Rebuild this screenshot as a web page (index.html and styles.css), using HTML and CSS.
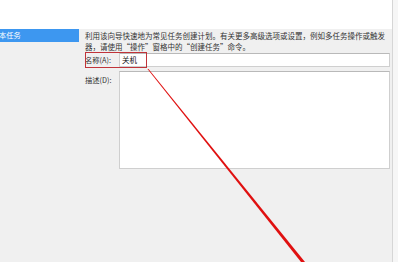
FILE: index.html
```html
<!DOCTYPE html>
<html>
  <head>
    <meta charset="UTF-8" />
    <meta name="viewport" content="width=device-width, initial-scale=1.0" />
    <title>创建基本任务向导</title>
    <link rel="stylesheet" href="styles.css">
  </head>
  <body>
    <div class="window">
      <div class="window__main">
        <div class="header"></div>
        <div class="body">
          <div class="steps">
            <div class="steps__item steps__item--active">本任务</div>
          </div>
          <div class="panel">
            <p class="panel__intro">
              利用该向导快速地为常见任务创建计划。有关更多高级选项或设置，例如多任务操作或触发器，请使用“操作”窗格中的“创建任务”命令。
            </p>
            <div class="field field--name">
              <label class="field__label">名称(A):</label>
              <div class="field__input">关机</div>
              <div class="mark"></div>
            </div>
            <div class="field field--desc">
              <label class="field__label">描述(D):</label>
              <div class="field__input field__input--area"></div>
            </div>
          </div>
        </div>
      </div>
      <div class="window__edge"></div>
    </div>

    <!-- hand-drawn arrow from the red box -->
    <svg class="arrow" width="398" height="262" viewBox="0 0 398 262">
      <polygon points="147.5,69 148.5,69 305,262 301,262" fill="#e01010" />
    </svg>
  </body>
</html>
```

FILE: styles.css
```css
body {
  margin: 0;
  padding: 0;
  background: #f0f0f0;
  font-family: "Noto Sans CJK SC", "Microsoft YaHei", sans-serif;
  color: #222;
  width: 398px;
  height: 262px;
  overflow: hidden;
}

.window {
  display: flex;
  height: 262px;
}

.window__main {
  flex: 1;
  display: flex;
  flex-direction: column;
}

.window__edge {
  width: 5px;
  border-left: 1px solid #d6d6d6;
  background: #f6f6f6;
}

.header {
  height: 29px;
  background: #ffffff;
}

.body {
  flex: 1;
  display: flex;
}

.steps {
  width: 79px;
}

.steps__item {
  height: 13px;
  line-height: 13px;
  font-size: 7.3px;
  color: #fff;
  overflow: hidden;
  white-space: nowrap;
}

.steps__item--active {
  background: #3d97f0;
  text-indent: -1px;
}

.panel {
  flex: 1;
  padding: 1px 0 0 6px;
}

.panel__intro {
  margin: 0;
  width: 301px;
  font-size: 7.5px;
  line-height: 11px;
  color: #333;
}

.field {
  display: flex;
  position: relative;
}

.field--name {
  margin-top: 1px;
  align-items: center;
}

.field--desc {
  margin-top: 4px;
}

.field__label {
  width: 34px;
  font-size: 7.3px;
  line-height: 14px;
  color: #333;
}

.field--desc .field__label {
  padding-top: 2px;
}

.field__input {
  width: 271px;
  height: 14px;
  box-sizing: border-box;
  background: #fff;
  border: 1px solid #cfcfcf;
  border-top-color: #b9b9b9;
  font-size: 7.5px;
  line-height: 12px;
  padding-left: 2px;
  color: #111;
}

.field__input--area {
  height: 98px;
}

.mark {
  position: absolute;
  left: 0;
  top: -1px;
  width: 62px;
  height: 16px;
  box-sizing: border-box;
  border: 1px solid #c0343a;
}

.arrow {
  position: absolute;
  left: 0;
  top: 0;
  pointer-events: none;
}
```
